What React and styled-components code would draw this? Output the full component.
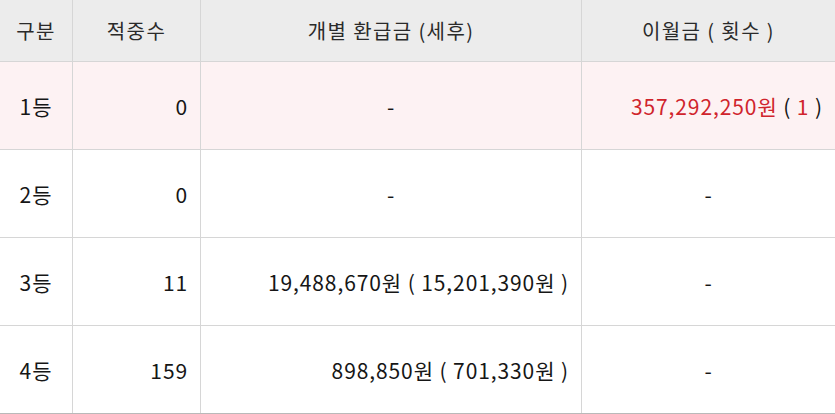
import React from 'react';
import styled, { createGlobalStyle } from 'styled-components';

const GlobalStyle = createGlobalStyle`
  body {
    margin: 0;
    background: #ffffff;
    font-family: 'Noto Sans CJK KR', 'Noto Sans', sans-serif;
  }
`;

const Table = styled.div`
  width: 835px;
  border-bottom: 2px solid #b9b9b9;
`;

const Row = styled.div`
  display: grid;
  grid-template-columns: 73px 128px 381px 1fr;
  height: ${(p) => (p.head ? '62px' : '88px')};
  background: ${(p) => (p.head ? '#ececec' : p.highlight ? '#fdf2f3' : '#ffffff')};
  border-bottom: 1px solid #d6d6d6;
  box-sizing: border-box;
  &:last-child {
    border-bottom: none;
    height: 87px;
  }
`;

const Cell = styled.div`
  display: flex;
  align-items: center;
  justify-content: ${(p) =>
    p.align === 'right' ? 'flex-end' : p.align === 'left' ? 'flex-start' : 'center'};
  padding: 0 ${(p) => (p.align === 'right' ? '12px' : '13px')};
  border-right: 1px solid #d6d6d6;
  font-size: ${(p) => (p.head ? '20px' : '21px')};
  letter-spacing: ${(p) => (p.head ? '1.4px' : '0.9px')};
  color: ${(p) => (p.head ? '#2a2a2a' : '#161616')};
  white-space: nowrap;
  box-sizing: border-box;
  &:last-child {
    border-right: none;
  }
`;

const Red = styled.span`
  color: #d0242c;
`;

const rows = [
  { rank: '1등', count: '0', refund: '-', carry: 'red', highlight: true },
  { rank: '2등', count: '0', refund: '-', carry: '-' },
  { rank: '3등', count: '11', refund: '19,488,670원 ( 15,201,390원 )', carry: '-' },
  { rank: '4등', count: '159', refund: '898,850원 ( 701,330원 )', carry: '-' },
];

const App = () => (
  <>
    <GlobalStyle />
    <Table>
      <Row head>
        <Cell head>구분</Cell>
        <Cell head>적중수</Cell>
        <Cell head>개별 환급금 (세후)</Cell>
        <Cell head>이월금 ( 횟수 )</Cell>
      </Row>
      {rows.map((r) => (
        <Row key={r.rank} highlight={r.highlight}>
          <Cell>{r.rank}</Cell>
          <Cell align="right">{r.count}</Cell>
          <Cell align={r.refund === '-' ? 'center' : 'right'}>{r.refund}</Cell>
          {r.carry === 'red' ? (
            <Cell align="right">
              <Red>357,292,250원</Red>&nbsp;(&nbsp;<Red>1</Red>&nbsp;)
            </Cell>
          ) : (
            <Cell>{r.carry}</Cell>
          )}
        </Row>
      ))}
    </Table>
  </>
);

export default App;
